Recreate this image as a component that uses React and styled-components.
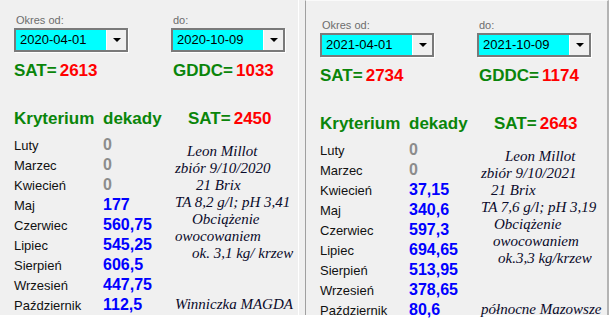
import React from 'react';
import styled, { createGlobalStyle } from 'styled-components';

const GlobalStyle = createGlobalStyle`
  html, body {
    margin: 0;
    padding: 0;
    background: #ffffff;
  }
  body {
    font-family: 'Liberation Sans', Arial, sans-serif;
  }
`;

const Screen = styled.div`
  display: flex;
  align-items: flex-start;
  width: 613px;
  height: 318px;
  background: #ffffff;
  overflow: hidden;
`;

const LeftFrame = styled.div`
  width: 298px;
  height: 315px;
  background: #f0f0f0;
  border-right: 1px solid #ffffff;
`;

const Gap = styled.div`
  width: 6px;
  height: 315px;
  background: #f0f0f0;
`;

const RightFrame = styled.div`
  width: 301px;
  height: 314px;
  background: #f0f0f0;
  border-top: 1px solid #fafafa;
  border-left: 1px solid #a0a0a0;
  border-right: 2px solid #b4b4b4;
`;

const Panel = styled.div`
  padding: ${(p) => (p.$shifted ? '18px 0 0 14px' : '14px 0 0 14px')};
  color: #000;
`;

const DateRow = styled.div`
  display: grid;
  grid-template-columns: 157px 116px;
`;

const DateField = styled.div`
  display: flex;
  flex-direction: column;
`;

const FieldLabel = styled.div`
  font-size: 11px;
  line-height: 13px;
  color: #6d6d6d;
  padding-left: 2px;
  margin-bottom: 1px;
`;

const Combo = styled.div`
  display: flex;
  width: 110px;
  height: 20px;
  border: 2px solid #7a7a7a;
  box-shadow: 1px 1px 0 #ffffff;
  background: #00ffff;
`;

const ComboText = styled.div`
  flex: 1;
  font-size: 13px;
  line-height: 20px;
  padding-left: 4px;
`;

const ComboButton = styled.div`
  width: 19px;
  display: flex;
  align-items: center;
  justify-content: center;
  background: #f0f0f0;
  border-left: 1px solid #ffffff;
`;

const Arrow = styled.div`
  width: 0;
  height: 0;
  border-left: 4px solid transparent;
  border-right: 4px solid transparent;
  border-top: 4px solid #000;
`;

const StatRow = styled.div`
  display: grid;
  grid-template-columns: 159px auto;
  margin-top: 9px;
`;

const Stat = styled.div`
  font-size: 17px;
  font-weight: bold;
  line-height: 20px;
  color: #0a850a;
`;

const Red = styled.span`
  color: #ff0000;
  margin-left: 3px;
`;

const CriterionRow = styled.div`
  display: grid;
  grid-template-columns: 89px 85px auto;
  margin-top: 28px;
  font-size: 17px;
  font-weight: bold;
  line-height: 20px;
  color: #0a850a;
`;

const Body = styled.div`
  display: flex;
  margin-top: 6px;
`;

const Months = styled.div`
  width: 161px;
  display: flex;
  flex-direction: column;
`;

const MonthRow = styled.div`
  display: grid;
  grid-template-columns: 89px auto;
  align-items: baseline;
  height: 20px;
`;

const MonthName = styled.div`
  font-size: 13px;
  line-height: 20px;
  color: #111;
`;

const MonthValue = styled.div`
  font-size: 16px;
  font-weight: bold;
  line-height: 20px;
  color: ${(p) => (p.$zero ? '#8c8c8c' : '#0000ff')};
`;

const Notes = styled.div`
  margin-top: 8px;
  font-family: 'Liberation Serif', 'Times New Roman', serif;
  font-style: italic;
  font-size: 15px;
  line-height: 17px;
  color: #0a0a2a;
  white-space: nowrap;
`;

const NoteLine = styled.div`
  height: 17px;
  padding-left: ${(p) => p.$indent || 0}px;
`;

const DateCombo = ({ label, value }) => (
  <DateField>
    <FieldLabel>{label}</FieldLabel>
    <Combo>
      <ComboText>{value}</ComboText>
      <ComboButton>
        <Arrow />
      </ComboButton>
    </Combo>
  </DateField>
);

const MONTHS = [
  'Luty',
  'Marzec',
  'Kwiecień',
  'Maj',
  'Czerwiec',
  'Lipiec',
  'Sierpień',
  'Wrzesień',
  'Październik',
];

const SeasonPanel = ({ data, shifted }) => (
  <Panel $shifted={shifted}>
    <DateRow>
      <DateCombo label="Okres od:" value={data.from} />
      <DateCombo label="do:" value={data.to} />
    </DateRow>
    <StatRow>
      <Stat>
        SAT=<Red>{data.sat}</Red>
      </Stat>
      <Stat>
        GDDC=<Red>{data.gddc}</Red>
      </Stat>
    </StatRow>
    <CriterionRow>
      <div>Kryterium</div>
      <div>dekady</div>
      <div>
        SAT=<Red>{data.decadeSat}</Red>
      </div>
    </CriterionRow>
    <Body>
      <Months>
        {MONTHS.map((m, i) => (
          <MonthRow key={m}>
            <MonthName>{m}</MonthName>
            <MonthValue $zero={data.values[i] === '0'}>{data.values[i]}</MonthValue>
          </MonthRow>
        ))}
      </Months>
      <Notes>
        {data.notes.map((n, i) => (
          <NoteLine key={i} $indent={n[0]}>
            {n[1]}
          </NoteLine>
        ))}
      </Notes>
    </Body>
  </Panel>
);

const season2020 = {
  from: '2020-04-01',
  to: '2020-10-09',
  sat: '2613',
  gddc: '1033',
  decadeSat: '2450',
  values: ['0', '0', '0', '177', '560,75', '545,25', '606,5', '447,75', '112,5'],
  notes: [
    [12, 'Leon Millot'],
    [0, 'zbiór 9/10/2020'],
    [21, '21 Brix'],
    [0, 'TA 8,2 g/l; pH 3,41'],
    [17, 'Obciążenie'],
    [0, 'owocowaniem'],
    [17, 'ok. 3,1 kg/ krzew'],
    [0, ''],
    [0, ''],
    [0, 'Winniczka MAGDA'],
  ],
};

const season2021 = {
  from: '2021-04-01',
  to: '2021-10-09',
  sat: '2734',
  gddc: '1174',
  decadeSat: '2643',
  values: ['0', '0', '37,15', '340,6', '597,3', '694,65', '513,95', '378,65', '80,6'],
  notes: [
    [24, 'Leon Millot'],
    [0, 'zbiór 9/10/2021'],
    [10, '21 Brix'],
    [0, 'TA 7,6 g/l; pH 3,19'],
    [13, 'Obciążenie'],
    [12, 'owocowaniem'],
    [17, 'ok.3,3 kg/krzew'],
    [0, ''],
    [0, ''],
    [0, 'północne Mazowsze'],
  ],
};

const App = () => (
  <>
    <GlobalStyle />
    <Screen>
      <LeftFrame>
        <SeasonPanel data={season2020} />
      </LeftFrame>
      <Gap />
      <RightFrame>
        <SeasonPanel data={season2021} shifted />
      </RightFrame>
    </Screen>
  </>
);

export default App;
